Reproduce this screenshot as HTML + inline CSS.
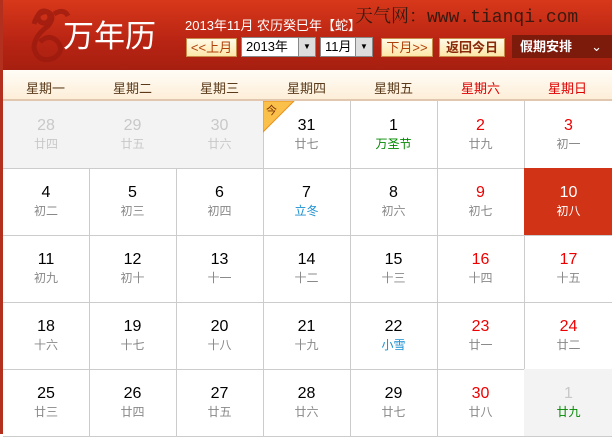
<!DOCTYPE html><html><head><meta charset="utf-8"><style>
*{margin:0;padding:0;box-sizing:border-box}
body{width:612px;height:434px;overflow:hidden;background:#fff;font-family:"Liberation Sans","Noto Sans CJK SC",sans-serif;position:relative}
.hd{position:absolute;left:0;top:0;width:612px;height:70px;background:linear-gradient(#d8381a,#b82413 60%,#a61f10)}
.wk{position:absolute;left:0;top:70px;width:612px;height:31px;background:linear-gradient(#fffdf7,#fdeed8);border-bottom:2px solid #e2c7b0}
.wk span{position:absolute;top:8px;width:87px;text-align:center;font-size:13px;color:#5a3a1a}
.lb{position:absolute;left:0;top:0;width:3px;height:434px;background:#b3301f}
.c{position:absolute;width:88px;height:68px;border-right:1px solid #ccc;border-bottom:1px solid #ccc;text-align:center}
.c b{display:block;font-weight:normal;font-size:16px;margin-top:15px;color:#000;line-height:20px}
.c i{display:block;font-style:normal;font-size:12px;color:#888;line-height:16px}
.g{background:#f3f3f3}.g b,.g i{color:#c8c8c8}
.r b{color:#e00}
.btn{position:absolute;top:38px;height:19px;background:linear-gradient(#fffbe8,#fde6a8);border:1px solid #c98a4a;font-size:13px;color:#b0400a;text-align:center;line-height:17px}
.sel{position:absolute;top:37px;height:20px;background:#fff;border:1px solid #888;font-size:13px;line-height:18px;padding-left:4px}
.sel:after{content:"▼";position:absolute;right:0;top:0;width:16px;height:18px;background:#ddd;border-left:1px solid #888;font-size:8px;text-align:center;line-height:18px}
</style></head><body>
<div class="hd">
<svg style="position:absolute;left:24px;top:4px" width="48" height="62"><g fill="none" stroke="#9a1a0e" stroke-width="5" opacity=".75"><path d="M10 20 Q14 6 24 8 Q32 12 24 22 Q10 32 10 44 Q14 60 30 54 Q42 46 32 36 Q24 30 16 38"/><circle cx="20" cy="13" r="6"/><path d="M30 10 Q40 4 44 12"/></g></svg>
<div style="position:absolute;left:63px;top:11px;font-size:31px;color:#fff">万年历</div>
<div style="position:absolute;left:185px;top:15px;font-size:13px;color:#fff">2013年11月 农历癸巳年【蛇】</div>
<div style="position:absolute;left:355px;top:2px;font-size:18px;color:#3a1a10;font-family:'Liberation Mono','Noto Serif CJK SC',monospace">天气网：www.tianqi.com</div>
<div class="btn" style="left:186px;width:51px">&lt;&lt;上月</div>
<div class="sel" style="left:241px;width:75px">2013年</div>
<div class="sel" style="left:320px;width:53px">11月</div>
<div class="btn" style="left:381px;width:52px">下月&gt;&gt;</div>
<div class="btn" style="left:439px;width:66px;font-weight:bold;color:#8a2a0a">返回今日</div>
<div style="position:absolute;left:512px;top:35px;width:100px;height:23px;background:#7c1a0c;color:#fff;font-size:13px;font-weight:bold;line-height:23px;padding-left:8px">假期安排 <span style="position:absolute;right:10px;font-weight:normal">⌄</span></div>
</div>
<div class="wk"><span style="left:2px">星期一</span><span style="left:89px">星期二</span><span style="left:176px">星期三</span><span style="left:263px">星期四</span><span style="left:350px">星期五</span><span style="left:437px;color:#d00">星期六</span><span style="left:524px;color:#d00">星期日</span></div>
<div class="lb"></div>
<div id="g"></div>
<script>
var d=[["28","廿四","g"],["29","廿五","g"],["30","廿六","g"],["31","廿七","t"],["1","万圣节","gr"],["2","廿九","r"],["3","初一","r"],
["4","初二"],["5","初三"],["6","初四"],["7","立冬","bl"],["8","初六"],["9","初七","r"],["10","初八","sel"],
["11","初九"],["12","初十"],["13","十一"],["14","十二"],["15","十三"],["16","十四","r"],["17","十五","r"],
["18","十六"],["19","十七"],["20","十八"],["21","十九"],["22","小雪","bl"],["23","廿一","r"],["24","廿二","r"],
["25","廿三"],["26","廿四"],["27","廿五"],["28","廿六"],["29","廿七"],["30","廿八","r"],["1","廿九","gg"]];
var h="";d.forEach(function(x,k){var c=k%7,r=Math.floor(k/7);var L=c==0?3:2+c*87,W=c==0?87:88;var cls="c",st="",ist="",bst="";
if(x[2]=="g"||x[2]=="gg")cls+=" g";if(x[2]=="r")cls+=" r";if(x[2]=="gr")ist="color:#080";if(x[2]=="bl")ist="color:#1a8fd0";
if(x[2]=="gg")ist="color:#080";if(x[2]=="sel"){st="background:#d13316;";bst="color:#fff";ist="color:#fff";}
if(c==6)W=90;
h+='<div class="'+cls+'" style="left:'+L+'px;top:'+(101+r*67)+'px;width:'+W+'px;'+st+'"><b style="'+bst+'">'+x[0]+'</b><i style="'+ist+'">'+x[1]+'</i>'+(x[2]=="t"?'<svg style="position:absolute;left:0;top:0" width="32" height="32"><path d="M0 0H31L0 31Z" fill="#fbc04a" stroke="#e89020"/><text x="3" y="13" font-size="11" fill="#7a3000" font-family="Noto Sans CJK SC">今</text></svg>':'')+'</div>'});
document.getElementById("g").innerHTML=h;
</script>
</body></html>
